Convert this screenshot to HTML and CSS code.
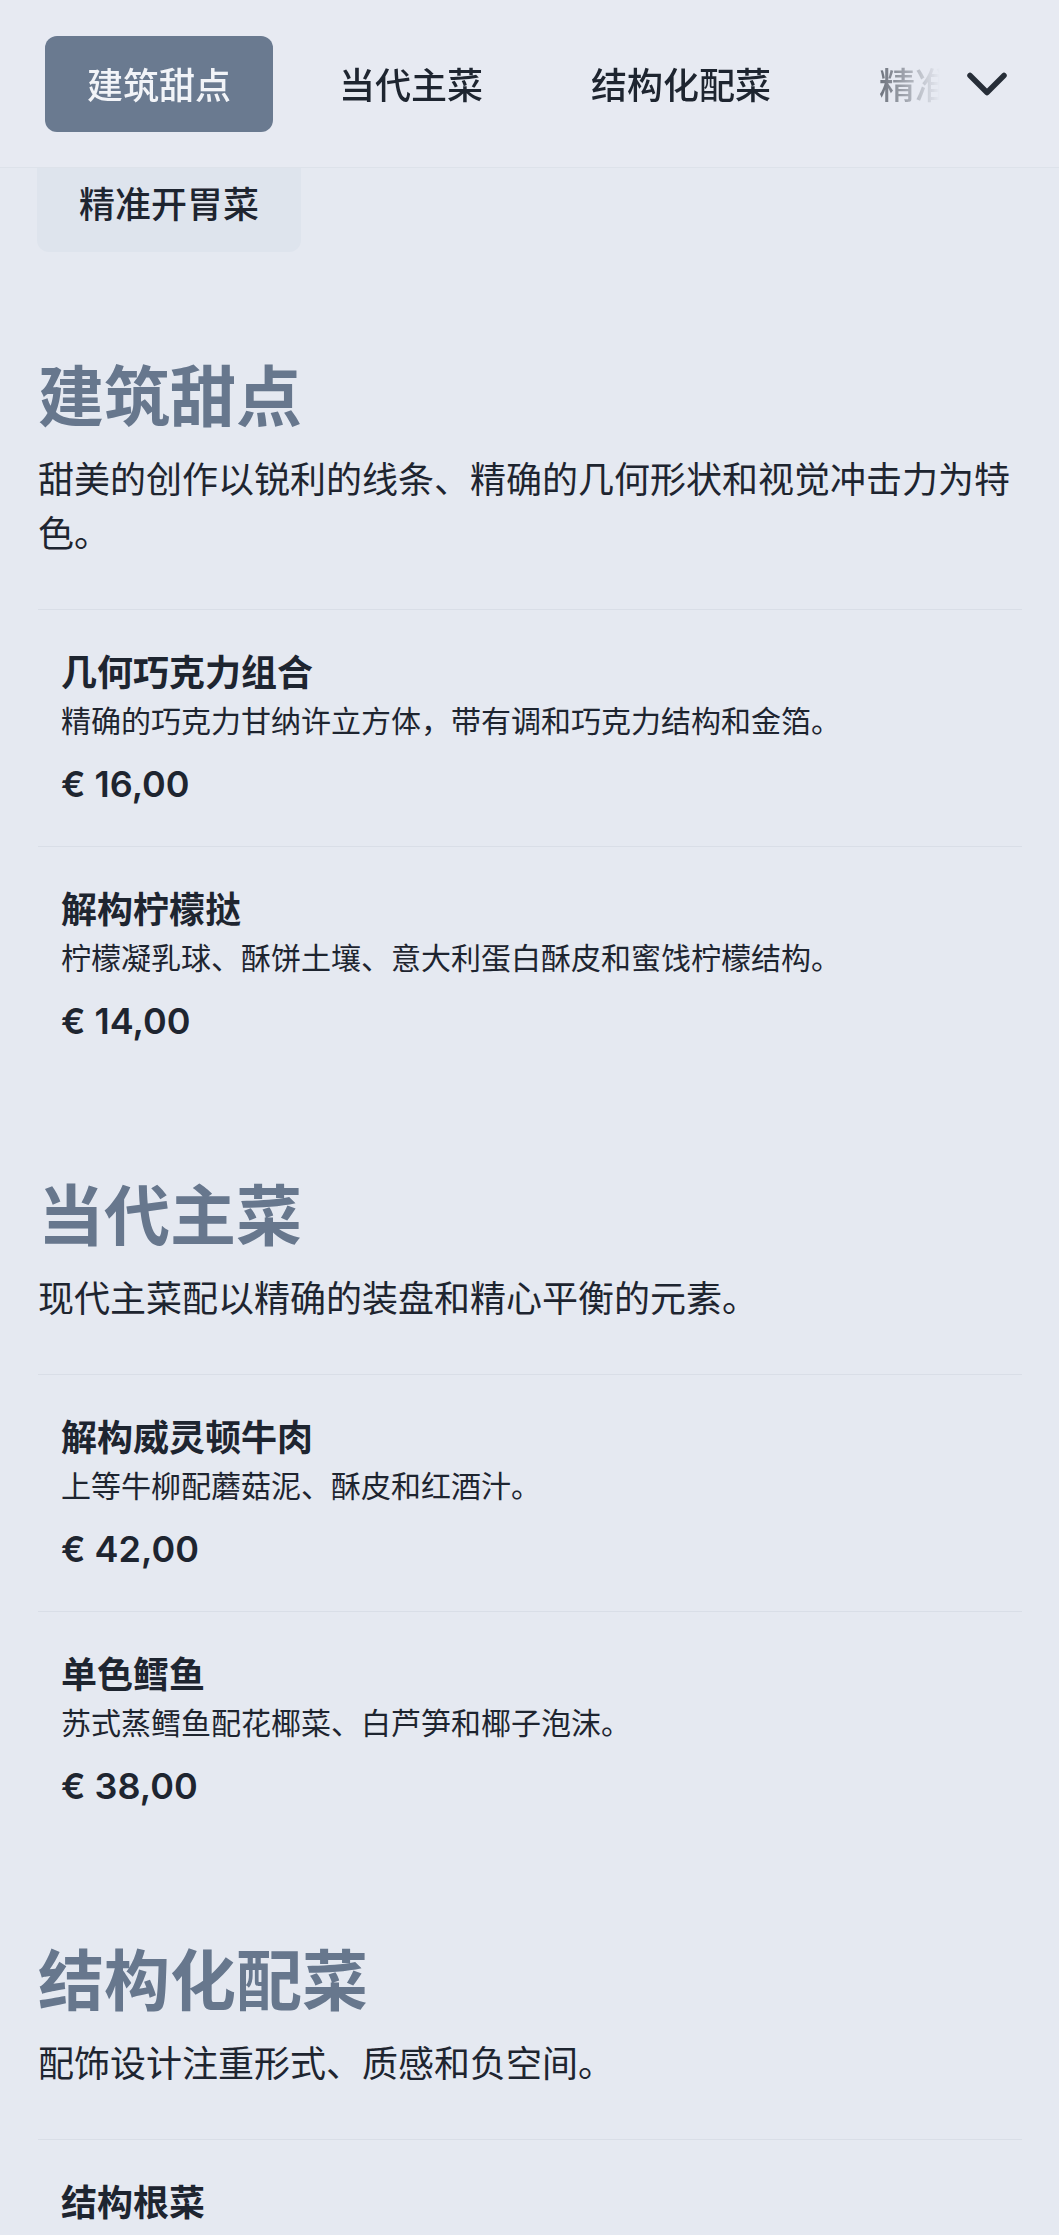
FILE: index.html
```html
<!DOCTYPE html>
<html lang="zh-CN">
<head>
<meta charset="utf-8">
<title>菜单</title>
<link rel="stylesheet" href="styles.css">
</head>
<body>
<header class="tabbar">
  <nav class="tabs">
    <button class="tab tab-active">建筑甜点</button>
    <button class="tab">当代主菜</button>
    <button class="tab">结构化配菜</button>
    <button class="tab">精准开胃菜</button>
  </nav>
  <button class="more" aria-label="更多">
    <svg class="chev" width="40" height="24" viewBox="0 0 40 24"><polyline points="3,3.5 20,20.5 37,3.5" fill="none" stroke="#272e38" stroke-width="5.5" stroke-linecap="round" stroke-linejoin="round"/></svg>
  </button>
</header>
<div class="overflow">
  <span class="chip">精准开胃菜</span>
</div>
<main class="menu">
  <section class="category">
    <h2 class="cat-title">建筑甜点</h2>
    <p class="cat-desc">甜美的创作以锐利的线条、精确的几何形状和视觉冲击力为特色。</p>
    <ul class="items">
      <li class="item">
        <h3 class="item-name">几何巧克力组合</h3>
        <p class="item-desc">精确的巧克力甘纳许立方体，带有调和巧克力结构和金箔。</p>
        <span class="price">€ 16,00</span>
      </li>
      <li class="item">
        <h3 class="item-name">解构柠檬挞</h3>
        <p class="item-desc">柠檬凝乳球、酥饼土壤、意大利蛋白酥皮和蜜饯柠檬结构。</p>
        <span class="price">€ 14,00</span>
      </li>
    </ul>
  </section>
  <section class="category">
    <h2 class="cat-title">当代主菜</h2>
    <p class="cat-desc">现代主菜配以精确的装盘和精心平衡的元素。</p>
    <ul class="items">
      <li class="item">
        <h3 class="item-name">解构威灵顿牛肉</h3>
        <p class="item-desc">上等牛柳配蘑菇泥、酥皮和红酒汁。</p>
        <span class="price">€ 42,00</span>
      </li>
      <li class="item">
        <h3 class="item-name">单色鳕鱼</h3>
        <p class="item-desc">苏式蒸鳕鱼配花椰菜、白芦笋和椰子泡沫。</p>
        <span class="price">€ 38,00</span>
      </li>
    </ul>
  </section>
  <section class="category">
    <h2 class="cat-title">结构化配菜</h2>
    <p class="cat-desc">配饰设计注重形式、质感和负空间。</p>
    <ul class="items">
      <li class="item">
        <h3 class="item-name">结构根菜</h3>
      </li>
    </ul>
  </section>
</main>
</body>
</html>
```

FILE: styles.css
```css
html, body {
  margin: 0;
  padding: 0;
}

body {
  background: #e5e9f1;
  color: #1e2530;
  font-family: "Noto Sans CJK SC", "Noto Sans", sans-serif;
}

.tabbar {
  position: sticky;
  top: 0;
  z-index: 2;
  display: flex;
  align-items: center;
  height: 167px;
  padding-left: 45px;
  box-sizing: content-box;
  background: #e7eaf2;
  border-bottom: 1px solid #dde2ea;
}

.tabs {
  flex: 0 0 895px;
  display: flex;
  gap: 24px;
  overflow: hidden;
  white-space: nowrap;
  -webkit-mask-image: linear-gradient(to right, #000 0, #000 795px, transparent 895px);
  mask-image: linear-gradient(to right, #000 0, #000 795px, transparent 895px);
}

.tab {
  flex: 0 0 auto;
  margin: 0;
  border: 0;
  padding: 20px 42px 22px;
  border-radius: 12px;
  background: transparent;
  color: #1e2530;
  font-family: inherit;
  font-size: 36px;
  line-height: 54px;
  font-weight: 500;
}

.tab-active {
  background: #6a7a90;
  color: #f2f4f8;
}

.more {
  flex: 0 0 94px;
  height: 96px;
  margin: 0;
  padding: 0;
  border: 0;
  background: transparent;
  display: flex;
  align-items: center;
  justify-content: center;
}

.chev {
  display: block;
}

.overflow {
  margin-top: -12px;
  padding-left: 37px;
  position: relative;
  z-index: 1;
}

.chip {
  display: inline-block;
  padding: 19px 42px 23px;
  border-radius: 12px;
  background: #dee4ed;
  color: #1e2530;
  font-size: 36px;
  line-height: 54px;
  font-weight: 500;
}

.menu {
  padding: 12px 37px 0 38px;
}

.category {
  padding-top: 85px;
}

.cat-title {
  margin: 0;
  font-size: 66px;
  line-height: 86px;
  font-weight: 700;
  color: #67778d;
}

.cat-desc {
  margin: 15px 0 51px;
  font-size: 36px;
  line-height: 54px;
  font-weight: 400;
  color: #1e2530;
}

.items {
  list-style: none;
  margin: 0;
  padding: 0;
}

.item {
  border-top: 1px solid #d9dee7;
  padding: 33px 23px 35px;
  display: flex;
  flex-direction: column;
}

.item-name {
  margin: 0;
  font-size: 36px;
  line-height: 54px;
  font-weight: 700;
  color: #1e2530;
}

.item-desc {
  margin: 0;
  font-size: 30px;
  line-height: 45px;
  font-weight: 400;
  color: #1e2530;
}

.price {
  margin-top: 15px;
  font-family: "Inter", "Noto Sans", sans-serif;
  font-size: 36px;
  line-height: 54px;
  font-weight: 600;
  color: #1e2530;
}
```
